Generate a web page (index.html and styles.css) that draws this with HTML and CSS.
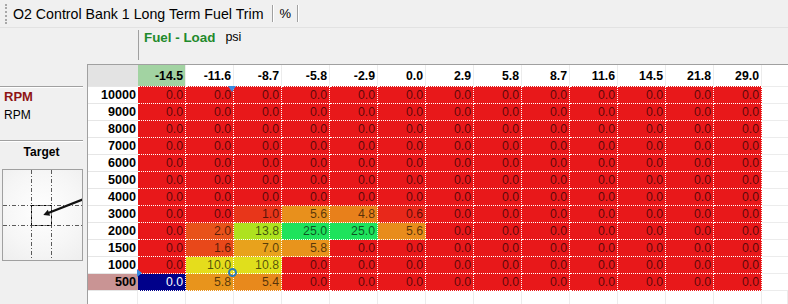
FILE: index.html
```html
<!DOCTYPE html>
<html>
<head>
<meta charset="utf-8">
<title>O2 Control Bank 1 Long Term Fuel Trim</title>
<link rel="stylesheet" href="styles.css">
</head>
<body>
<div class="app">
  <div class="toolbar">
    <span class="grip"></span>
    <span class="title">O2 Control Bank 1 Long Term Fuel Trim</span>
    <span class="sep"></span>
    <span class="unit-btn">%</span>
    <span class="sep"></span>
  </div>
  <div class="main">
    <div class="corner"></div>
    <div class="axis-x">
      <div class="axis-x-inner"><span class="axis-name">Fuel - Load</span><span class="axis-unit">psi</span></div>
    </div>
    <div class="side">
      <div class="rule first-rule"></div>
      <div class="axis-y-name">RPM</div>
      <div class="axis-y-unit">RPM</div>
      <div class="rule second-rule"></div>
      <div class="target-title">Target</div>
      <div class="target-box">
        <svg width="79" height="90" viewBox="0 0 79 90">
          <g stroke="#5a5a5a" stroke-width="1" stroke-dasharray="4 2 1 2" fill="none">
            <line x1="28.5" y1="0" x2="28.5" y2="90"/>
            <line x1="48.5" y1="0" x2="48.5" y2="90"/>
            <line x1="0" y1="35.5" x2="79" y2="35.5"/>
            <line x1="0" y1="55.5" x2="79" y2="55.5"/>
          </g>
          <rect x="28.5" y="35.5" width="20" height="20" fill="#fafafa" stroke="#000" stroke-width="1" stroke-dasharray="3 1 1 1"/>
          <line x1="80" y1="29.3" x2="44" y2="43.6" stroke="#111" stroke-width="2.2"/>
          <polygon points="40.3,45 47.2,45.8 44.8,39.8" fill="#111"/>
        </svg>
      </div>
    </div>
    <div class="table-wrap">
      <div class="grid">
        <div class="hc"></div>
        <div class="ch sel">-14.5</div><div class="ch">-11.6</div><div class="ch">-8.7</div><div class="ch">-5.8</div><div class="ch">-2.9</div><div class="ch">0.0</div><div class="ch">2.9</div><div class="ch">5.8</div><div class="ch">8.7</div><div class="ch">11.6</div><div class="ch">14.5</div><div class="ch">21.8</div><div class="ch">29.0</div>
        <div class="fh"></div>

        <div class="rh first">10000</div>
        <div class="c first">0.0</div><div class="c first">0.0</div><div class="c first">0.0</div><div class="c first">0.0</div><div class="c first">0.0</div><div class="c first">0.0</div><div class="c first">0.0</div><div class="c first">0.0</div><div class="c first">0.0</div><div class="c first">0.0</div><div class="c first">0.0</div><div class="c first">0.0</div><div class="c first">0.0</div>
        <div class="fr first"></div>

        <div class="rh">9000</div>
        <div class="c">0.0</div><div class="c">0.0</div><div class="c">0.0</div><div class="c">0.0</div><div class="c">0.0</div><div class="c">0.0</div><div class="c">0.0</div><div class="c">0.0</div><div class="c">0.0</div><div class="c">0.0</div><div class="c">0.0</div><div class="c">0.0</div><div class="c">0.0</div>
        <div class="fr"></div>

        <div class="rh">8000</div>
        <div class="c">0.0</div><div class="c">0.0</div><div class="c">0.0</div><div class="c">0.0</div><div class="c">0.0</div><div class="c">0.0</div><div class="c">0.0</div><div class="c">0.0</div><div class="c">0.0</div><div class="c">0.0</div><div class="c">0.0</div><div class="c">0.0</div><div class="c">0.0</div>
        <div class="fr"></div>

        <div class="rh">7000</div>
        <div class="c">0.0</div><div class="c">0.0</div><div class="c">0.0</div><div class="c">0.0</div><div class="c">0.0</div><div class="c">0.0</div><div class="c">0.0</div><div class="c">0.0</div><div class="c">0.0</div><div class="c">0.0</div><div class="c">0.0</div><div class="c">0.0</div><div class="c">0.0</div>
        <div class="fr"></div>

        <div class="rh">6000</div>
        <div class="c">0.0</div><div class="c">0.0</div><div class="c">0.0</div><div class="c">0.0</div><div class="c">0.0</div><div class="c">0.0</div><div class="c">0.0</div><div class="c">0.0</div><div class="c">0.0</div><div class="c">0.0</div><div class="c">0.0</div><div class="c">0.0</div><div class="c">0.0</div>
        <div class="fr"></div>

        <div class="rh">5000</div>
        <div class="c">0.0</div><div class="c">0.0</div><div class="c">0.0</div><div class="c">0.0</div><div class="c">0.0</div><div class="c">0.0</div><div class="c">0.0</div><div class="c">0.0</div><div class="c">0.0</div><div class="c">0.0</div><div class="c">0.0</div><div class="c">0.0</div><div class="c">0.0</div>
        <div class="fr"></div>

        <div class="rh">4000</div>
        <div class="c">0.0</div><div class="c">0.0</div><div class="c">0.0</div><div class="c">0.0</div><div class="c">0.0</div><div class="c">0.0</div><div class="c">0.0</div><div class="c">0.0</div><div class="c">0.0</div><div class="c">0.0</div><div class="c">0.0</div><div class="c">0.0</div><div class="c">0.0</div>
        <div class="fr"></div>

        <div class="rh">3000</div>
        <div class="c">0.0</div><div class="c">0.0</div><div class="c" style="background:#e8361a">1.0</div><div class="c" style="background:#e8901c">5.6</div><div class="c" style="background:#e8801b">4.8</div><div class="c" style="background:#e8281a">0.6</div><div class="c">0.0</div><div class="c">0.0</div><div class="c">0.0</div><div class="c">0.0</div><div class="c">0.0</div><div class="c">0.0</div><div class="c">0.0</div>
        <div class="fr"></div>

        <div class="rh">2000</div>
        <div class="c">0.0</div><div class="c" style="background:#e8521a">2.0</div><div class="c" style="background:#aee21f">13.8</div><div class="c" style="background:#1ee35c">25.0</div><div class="c" style="background:#1ee35c">25.0</div><div class="c" style="background:#e88c1c">5.6</div><div class="c">0.0</div><div class="c">0.0</div><div class="c">0.0</div><div class="c">0.0</div><div class="c">0.0</div><div class="c">0.0</div><div class="c">0.0</div>
        <div class="fr"></div>

        <div class="rh">1500</div>
        <div class="c">0.0</div><div class="c" style="background:#e8481a">1.6</div><div class="c" style="background:#e8a21c">7.0</div><div class="c" style="background:#e8941c">5.8</div><div class="c">0.0</div><div class="c">0.0</div><div class="c">0.0</div><div class="c">0.0</div><div class="c">0.0</div><div class="c">0.0</div><div class="c">0.0</div><div class="c">0.0</div><div class="c">0.0</div>
        <div class="fr"></div>

        <div class="rh">1000</div>
        <div class="c">0.0</div><div class="c" style="background:#e5dd1c">10.0</div><div class="c" style="background:#e0df1c">10.8</div><div class="c">0.0</div><div class="c">0.0</div><div class="c">0.0</div><div class="c">0.0</div><div class="c">0.0</div><div class="c">0.0</div><div class="c">0.0</div><div class="c">0.0</div><div class="c">0.0</div><div class="c">0.0</div>
        <div class="fr"></div>

        <div class="rh sel">500</div>
        <div class="c cur">0.0</div><div class="c" style="background:#e8941c">5.8</div><div class="c" style="background:#e8891c">5.4</div><div class="c">0.0</div><div class="c">0.0</div><div class="c">0.0</div><div class="c">0.0</div><div class="c">0.0</div><div class="c">0.0</div><div class="c">0.0</div><div class="c">0.0</div><div class="c">0.0</div><div class="c">0.0</div>
        <div class="fr"></div>

        <div class="fb"></div><div class="fb"></div><div class="fb"></div><div class="fb"></div><div class="fb"></div><div class="fb"></div><div class="fb"></div><div class="fb"></div><div class="fb"></div><div class="fb"></div><div class="fb"></div><div class="fb"></div><div class="fb"></div><div class="fb"></div><div class="fb"></div>
      </div>
      <span class="marker-top"></span>
      <span class="marker-left"></span>
      <span class="ring"></span>
    </div>
  </div>
</div>
</body>
</html>
```

FILE: styles.css
```css
* { box-sizing: border-box; }
html, body { margin: 0; padding: 0; }
body {
  width: 788px;
  height: 304px;
  overflow: hidden;
  background: #f0f0f0;
  font-family: "Liberation Sans", Arial, sans-serif;
  color: #000;
}
.app { display: flex; flex-direction: column; height: 304px; }

/* toolbar */
.toolbar {
  height: 28px;
  flex: none;
  display: flex;
  align-items: center;
  padding-left: 5px;
  border-bottom: 1px solid #e2e2e2;
}
.grip { width: 2px; height: 20px; border-left: 2px dotted #a8a8a8; margin-right: 6px; }
.title { font-size: 14.2px; line-height: 16px; }
.sep { width: 2px; height: 17px; border-left: 1px solid #a0a0a0; border-right: 1px solid #fff; }
.title + .sep { margin-left: 8px; }
.unit-btn { font-size: 13px; line-height: 16px; margin: 0 6px; }

/* main area */
.main {
  flex: 1;
  min-height: 0;
  display: grid;
  grid-template-columns: 87px 1fr;
  grid-template-rows: 36px 1fr;
}
.axis-x { padding: 2px 0 0 51px; }
.axis-x-inner {
  height: 30px;
  border-left: 1px solid #a0a0a0;
  padding-left: 5px;
  display: flex;
  align-items: flex-start;
  line-height: 15px;
}
.axis-name { font-size: 13.4px; font-weight: bold; color: #1f8a2c; }
.axis-unit { font-size: 12.5px; margin-left: 10px; }

/* side panel */
.side { display: flex; flex-direction: column; align-items: flex-start; }
.rule { width: 83px; height: 2px; border-top: 1px solid #a0a0a0; border-bottom: 1px solid #fff; }
.first-rule { margin-top: 22px; }
.axis-y-name { font-size: 13px; font-weight: bold; color: #8e1414; line-height: 15px; padding-left: 4px; margin-top: 1px; }
.axis-y-unit { font-size: 12px; line-height: 14px; padding-left: 4px; margin-top: 4px; }
.second-rule { margin-top: 18px; }
.target-title { width: 83px; text-align: center; font-size: 12px; font-weight: bold; line-height: 14px; margin-top: 3px; }
.target-box {
  margin: 10px 0 0 2px;
  width: 81px;
  height: 92px;
  border: 1px solid #a0a0a0;
  background: radial-gradient(circle at 50% 45%, #ffffff 0%, #f6f6f6 60%, #eeeeee 100%);
}
.target-box svg { display: block; }

/* table */
.table-wrap {
  position: relative;
  background: #fff;
  border-top: 1px solid #a0a0a0;
  border-left: 1px solid #a0a0a0;
  overflow: hidden;
}
.grid {
  display: grid;
  grid-template-columns: 50px repeat(13, 48px) 1fr;
  grid-template-rows: 21px 18px repeat(11, 17px) 1fr;
  height: 100%;
  font-size: 12.3px;
}
.hc { background: #e3e3e3; }
.ch {
  font-weight: bold;
  text-align: right;
  padding: 1px 2px 0 0;
  line-height: 20px;
  border-right: 1px solid #ececec;
}
.ch.sel { background: #a2d3a2; }
.rh {
  font-weight: bold;
  font-size: 12.6px;
  text-align: right;
  padding-right: 2px;
  line-height: 16px;
  border-bottom: 1px solid #e6e6e6;
}
.rh.first { border-top: 1px solid #e6e6e6; }
.rh.sel { background: #c99494; }
.c {
  text-align: right;
  padding-right: 2px;
  line-height: 16px;
  background: #e8181a;
  color: rgba(0, 0, 0, 0.64);
  border-right: 1px dotted #fff;
  border-bottom: 1px dotted #fff;
}
.c.first { border-top: 1px dotted #fff; }
.c.cur { background: #00008a; color: #fff; }
.fr { border-bottom: 1px solid #ececec; }
.fr.first { border-top: 1px solid #ececec; }
.fb { border-right: 1px solid #ececec; }

/* overlays: axis position markers and cursor */
.marker-top {
  position: absolute;
  left: 140px;
  top: 21px;
  width: 0;
  height: 0;
  border-left: 4px solid transparent;
  border-right: 4px solid transparent;
  border-top: 6px solid #3a8ae0;
}
.marker-left {
  position: absolute;
  left: 49px;
  top: 204px;
  width: 0;
  height: 0;
  border-top: 4px solid transparent;
  border-bottom: 4px solid transparent;
  border-left: 5px solid #3a8ae0;
}
.ring {
  position: absolute;
  left: 140px;
  top: 203px;
  width: 9px;
  height: 9px;
  border: 2px solid #2b7bb9;
  border-radius: 50%;
}
```
